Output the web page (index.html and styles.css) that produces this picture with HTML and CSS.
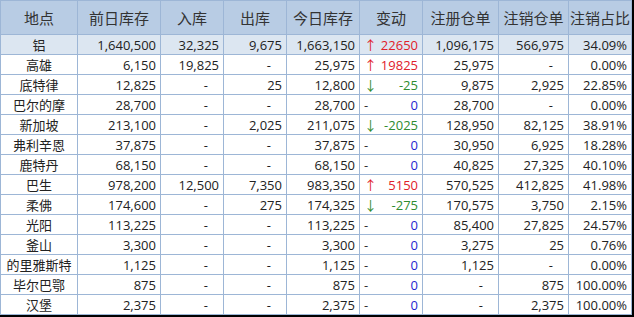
FILE: index.html
```html
<!DOCTYPE html>
<html lang="zh-CN">
  <head>
    <meta charset="UTF-8" />
    <title>库存</title>
    <link rel="stylesheet" href="styles.css">
  </head>
  <body>
    <table class="stock">
      <colgroup>
        <col style="width:77px"><col style="width:83px"><col style="width:63px"><col style="width:63px"><col style="width:73px"><col style="width:63px"><col style="width:76px"><col style="width:70px"><col style="width:63px">
      </colgroup>
      <thead>
        <tr><th>地点</th><th>前日库存</th><th>入库</th><th>出库</th><th>今日库存</th><th>变动</th><th>注册仓单</th><th>注销仓单</th><th>注销占比</th></tr>
      </thead>
      <tbody>
        <tr class="total"><td class="name">铝</td><td>1,640,500</td><td>32,325</td><td>9,675</td><td>1,663,150</td><td class="chg up"><span class="mark">↑</span><span>22650</span></td><td>1,096,175</td><td>566,975</td><td>34.09%</td></tr>
        <tr><td class="name">高雄</td><td>6,150</td><td>19,825</td><td class="nil">-</td><td>25,975</td><td class="chg up"><span class="mark">↑</span><span>19825</span></td><td>25,975</td><td class="nil">-</td><td>0.00%</td></tr>
        <tr><td class="name">底特律</td><td>12,825</td><td class="nil">-</td><td>25</td><td>12,800</td><td class="chg down"><span class="mark">↓</span><span>-25</span></td><td>9,875</td><td>2,925</td><td>22.85%</td></tr>
        <tr><td class="name">巴尔的摩</td><td>28,700</td><td class="nil">-</td><td class="nil">-</td><td>28,700</td><td class="chg zero"><span class="mark">-</span><span>0</span></td><td>28,700</td><td class="nil">-</td><td>0.00%</td></tr>
        <tr><td class="name">新加坡</td><td>213,100</td><td class="nil">-</td><td>2,025</td><td>211,075</td><td class="chg down"><span class="mark">↓</span><span>-2025</span></td><td>128,950</td><td>82,125</td><td>38.91%</td></tr>
        <tr><td class="name">弗利辛恩</td><td>37,875</td><td class="nil">-</td><td class="nil">-</td><td>37,875</td><td class="chg zero"><span class="mark">-</span><span>0</span></td><td>30,950</td><td>6,925</td><td>18.28%</td></tr>
        <tr><td class="name">鹿特丹</td><td>68,150</td><td class="nil">-</td><td class="nil">-</td><td>68,150</td><td class="chg zero"><span class="mark">-</span><span>0</span></td><td>40,825</td><td>27,325</td><td>40.10%</td></tr>
        <tr><td class="name">巴生</td><td>978,200</td><td>12,500</td><td>7,350</td><td>983,350</td><td class="chg up"><span class="mark">↑</span><span>5150</span></td><td>570,525</td><td>412,825</td><td>41.98%</td></tr>
        <tr><td class="name">柔佛</td><td>174,600</td><td class="nil">-</td><td>275</td><td>174,325</td><td class="chg down"><span class="mark">↓</span><span>-275</span></td><td>170,575</td><td>3,750</td><td>2.15%</td></tr>
        <tr><td class="name">光阳</td><td>113,225</td><td class="nil">-</td><td class="nil">-</td><td>113,225</td><td class="chg zero"><span class="mark">-</span><span>0</span></td><td>85,400</td><td>27,825</td><td>24.57%</td></tr>
        <tr><td class="name">釜山</td><td>3,300</td><td class="nil">-</td><td class="nil">-</td><td>3,300</td><td class="chg zero"><span class="mark">-</span><span>0</span></td><td>3,275</td><td>25</td><td>0.76%</td></tr>
        <tr><td class="name">的里雅斯特</td><td>1,125</td><td class="nil">-</td><td class="nil">-</td><td>1,125</td><td class="chg zero"><span class="mark">-</span><span>0</span></td><td>1,125</td><td class="nil">-</td><td>0.00%</td></tr>
        <tr><td class="name">毕尔巴鄂</td><td>875</td><td class="nil">-</td><td class="nil">-</td><td>875</td><td class="chg zero"><span class="mark">-</span><span>0</span></td><td class="nil">-</td><td>875</td><td>100.00%</td></tr>
        <tr><td class="name">汉堡</td><td>2,375</td><td class="nil">-</td><td class="nil">-</td><td>2,375</td><td class="chg zero"><span class="mark">-</span><span>0</span></td><td class="nil">-</td><td>2,375</td><td>100.00%</td></tr>
      </tbody>
    </table>
  </body>
</html>
```

FILE: styles.css
```css
* {
  margin: 0;
  padding: 0;
  box-sizing: border-box;
}
html {
  background: #000;
}
body {
  width: 634px;
  height: 317px;
  font-family: "Open Sans", "Noto Sans CJK SC", sans-serif;
  color: #222;
}
.stock {
  width: 631px;
  table-layout: fixed;
  border-collapse: collapse;
  background: #fff;
}
.stock th,
.stock td {
  border: 1px solid #9db6d6;
  white-space: nowrap;
  overflow: hidden;
}
.stock th {
  height: 34px;
  background: #b8cce4;
  font-family: "Noto Sans CJK SC", sans-serif;
  font-weight: normal;
  font-size: 15px;
  color: #333;
  text-align: center;
}
.stock td {
  height: 20px;
  font-size: 13px;
  line-height: 18px;
  text-align: right;
  padding: 0 4px;
}
.stock .total td {
  background: #dce6f1;
}
.stock td.name {
  font-family: "Noto Sans CJK SC", sans-serif;
  text-align: center;
  padding: 0;
}
.stock td.nil {
  padding-right: 15px;
}
.chg {
  display: flex;
}
.stock td.chg {
  display: table-cell;
}
.chg .mark {
  float: left;
  color: #333;
}
.chg.up {
  color: #e0202a;
}
.chg.up .mark {
  color: #e0202a;
}
.chg.down {
  color: #2e8b2e;
}
.chg.down .mark {
  color: #2e8b2e;
}
.chg.zero {
  color: #1f1fd0;
}
```
